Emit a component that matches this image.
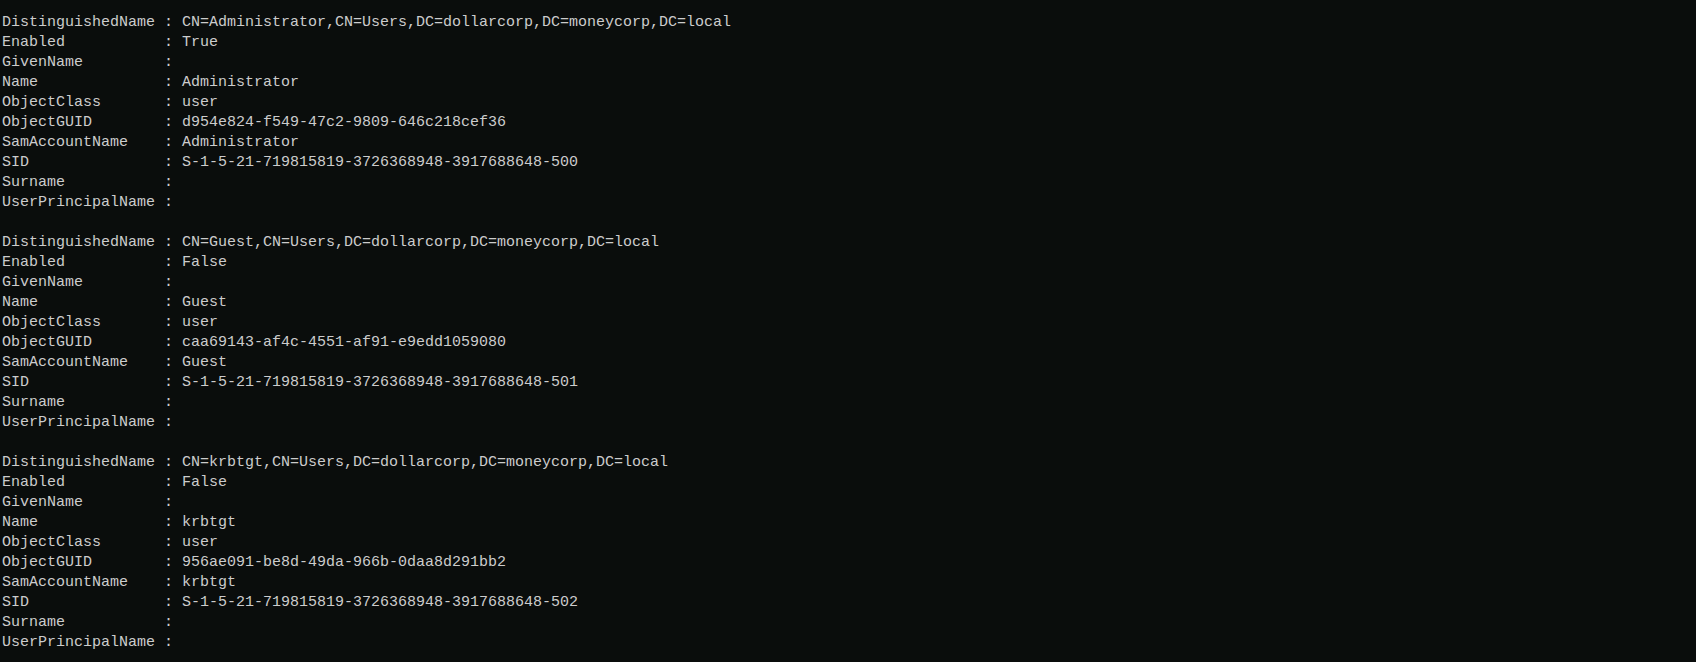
type AdUser = {
  dn: string;
  enabled: string;
  name: string;
  guid: string;
  sid: string;
};

const users: AdUser[] = [
  {
    dn: "CN=Administrator,CN=Users,DC=dollarcorp,DC=moneycorp,DC=local",
    enabled: "True",
    name: "Administrator",
    guid: "d954e824-f549-47c2-9809-646c218cef36",
    sid: "S-1-5-21-719815819-3726368948-3917688648-500",
  },
  {
    dn: "CN=Guest,CN=Users,DC=dollarcorp,DC=moneycorp,DC=local",
    enabled: "False",
    name: "Guest",
    guid: "caa69143-af4c-4551-af91-e9edd1059080",
    sid: "S-1-5-21-719815819-3726368948-3917688648-501",
  },
  {
    dn: "CN=krbtgt,CN=Users,DC=dollarcorp,DC=moneycorp,DC=local",
    enabled: "False",
    name: "krbtgt",
    guid: "956ae091-be8d-49da-966b-0daa8d291bb2",
    sid: "S-1-5-21-719815819-3726368948-3917688648-502",
  },
];

function rowsFor(u: AdUser): [string, string][] {
  return [
    ["DistinguishedName", u.dn],
    ["Enabled", u.enabled],
    ["GivenName", ""],
    ["Name", u.name],
    ["ObjectClass", "user"],
    ["ObjectGUID", u.guid],
    ["SamAccountName", u.name],
    ["SID", u.sid],
    ["Surname", ""],
    ["UserPrincipalName", ""],
  ];
}

export default function App() {
  return (
    <div className="h-[662px] w-full overflow-hidden bg-[#0a0d0c] pl-[2px] pt-[13px] font-['Liberation_Mono',monospace] text-[15px] leading-[20px] text-[#cccccc]">
      {users.map((u, i) => (
        <div key={u.guid} className={i > 0 ? "mt-[20px]" : ""}>
          {rowsFor(u).map(([label, value]) => (
            <div key={label} className="whitespace-pre">
              {label.padEnd(17, " ") + " : " + value}
            </div>
          ))}
        </div>
      ))}
    </div>
  );
}
